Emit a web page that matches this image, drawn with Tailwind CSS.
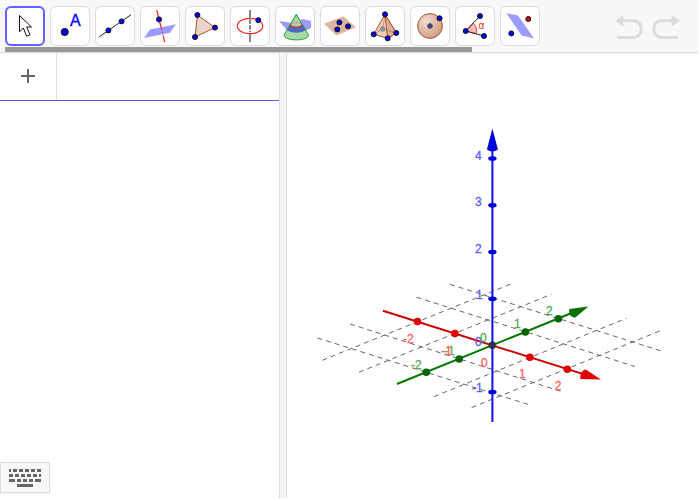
<!DOCTYPE html>
<html lang="en">
<head>
<meta charset="utf-8">
<title>3D Calculator</title>
<script src="https://cdn.jsdelivr.net/npm/@tailwindcss/browser@4"></script>
</head>
<body class="bg-white font-['Liberation_Sans',sans-serif]">
<div class="flex h-screen flex-col pr-0.5 pb-0.5">
  <header class="border-b border-[#dcdcdc] bg-[#f8f8f8] pt-1.5 shadow-xs">
    <div class="flex items-center justify-between pr-4 pl-[5px]">
      <nav aria-label="Tools" class="flex gap-[5px]">
        <button aria-label="Move" class="grid size-10 place-items-center rounded-md border-2 border-[#6161ff] bg-white">
          <svg class="size-8" viewBox="0 0 32 32"><path d="M10.5 5.5V21.8L14.3 18L17.6 26.2L21 24.8L17.7 17H22.5Z" fill="#fff" stroke="#1d0d14" stroke-width="1"/></svg>
        </button>
        <button aria-label="Point" class="grid size-10 place-items-center rounded-md border border-[#dcdcdc] bg-white">
          <svg class="size-8" viewBox="0 0 32 32"><circle cx="10.7" cy="22" r="3.6" fill="#0000e6" stroke="#111"/><text x="16" y="16" font-size="16" fill="#00f" stroke="#00f" stroke-width=".3">A</text></svg>
        </button>
        <button aria-label="Line" class="grid size-10 place-items-center rounded-md border border-[#dcdcdc] bg-white">
          <svg class="size-8" viewBox="0 0 32 32"><path d="M0 27L32 4.7" stroke="#222"/><g fill="#00e" stroke="#111"><circle cx="9.4" cy="20.4" r="2.5"/><circle cx="22.6" cy="11.4" r="2.5"/></g></svg>
        </button>
        <button aria-label="Perpendicular line" class="grid size-10 place-items-center rounded-md border border-[#dcdcdc] bg-white">
          <svg class="size-8" viewBox="0 0 32 32"><path d="M0 28L6 19.5L32 14.3L26 22.7Z" fill="#9c9cff"/><path d="M12.7 0L17.2 18M19.3 26.5L20.7 32" stroke="#f22" stroke-width="1.2"/><path d="M17.2 18L19.3 26.5" stroke="#d03070" stroke-dasharray="2 1.5"/><circle cx="15" cy="9.4" r="2.5" fill="#00e" stroke="#111"/></svg>
        </button>
        <button aria-label="Polygon" class="grid size-10 place-items-center rounded-md border border-[#dcdcdc] bg-white">
          <svg class="size-8" viewBox="0 0 32 32"><path d="M8.4 5L26 17.6L6 27Z" fill="#ebd5cb" stroke="#a9562b"/><g fill="#00e" stroke="#111"><circle cx="8.4" cy="5" r="2.5"/><circle cx="26" cy="17.6" r="2.5"/><circle cx="6" cy="27" r="2.5"/></g></svg>
        </button>
        <button aria-label="Circle with axis" class="grid size-10 place-items-center rounded-md border border-[#dcdcdc] bg-white">
          <svg class="size-8" viewBox="0 0 32 32"><ellipse cx="16" cy="16" rx="12.7" ry="7.7" fill="none" stroke="#f22" stroke-width="1.2"/><path d="M16 0V14" stroke="#888" stroke-width="2"/><path d="M16 24V32" stroke="#888" stroke-width="2"/><path d="M16 15.5V23.5" stroke="#777" stroke-width="2" stroke-dasharray="4 1.5 1 1.5"/><circle cx="24.3" cy="10.2" r="2.5" fill="#00e" stroke="#111"/></svg>
        </button>
        <button aria-label="Intersect surfaces" class="grid size-10 place-items-center rounded-md border border-[#dcdcdc] bg-white">
          <svg class="size-8" viewBox="0 0 32 32"><path d="M0 11L14 13L24 9L32 11V18L26 21L8 20Z" fill="#9c9cf8"/><path d="M17.3 4.5L5 25C5 31.5 29.5 31.5 29.5 25Z" fill="#a5dba5" stroke="#2f9b3f"/><path d="M11.2 14.5L8 20C12 23.5 23 23.5 26.6 20L23.4 14.5Z" fill="#4d68c0"/><path d="M17.3 5L11.5 14.3C13 18 21.5 18 23.1 14.3Z" fill="#a8d6ac"/><path d="M8 20L17.3 4.5L26.6 20" fill="none" stroke="#2f9b3f"/><path d="M11.2 14.5C13 18 21.5 18 23.4 14.5" fill="none" stroke="#e22" stroke-width="1.2"/><path d="M11.5 14.3C14 12 20.5 12 23.1 14.3" fill="none" stroke="#e55" stroke-width=".7" stroke-dasharray="2 1"/></svg>
        </button>
        <button aria-label="Plane through three points" class="grid size-10 place-items-center rounded-md border border-[#dcdcdc] bg-white">
          <svg class="size-8" viewBox="0 0 32 32"><path d="M0 13.8L19.5 6.5L32 17.3L12.5 25.5Z" fill="#dcb4a1"/><g fill="#00e" stroke="#111"><circle cx="15.4" cy="12.4" r="2.5"/><circle cx="24" cy="16.3" r="2.5"/><circle cx="13.3" cy="19.4" r="2.5"/></g></svg>
        </button>
        <button aria-label="Pyramid" class="grid size-10 place-items-center rounded-md border border-[#dcdcdc] bg-white">
          <svg class="size-8" viewBox="0 0 32 32"><path d="M16 4.3L4.7 24.3L18.7 28.3L27.3 23Z" fill="#edcdbd" stroke="#a9562b"/><path d="M16 4.3L18.7 28.3L27.3 23Z" fill="#deaf98" stroke="#a9562b"/><path d="M16 4.3L13.7 19L4.7 24.3M13.7 19L27.3 23" fill="none" stroke="#a9562b" stroke-width=".7" stroke-dasharray="2 1"/><circle cx="13.7" cy="19" r="2.3" fill="#8c94ae" stroke="#888"/><g fill="#00e" stroke="#111"><circle cx="16" cy="4.3" r="2.5"/><circle cx="4.7" cy="24.3" r="2.5"/><circle cx="18.7" cy="28.3" r="2.5"/><circle cx="27.3" cy="23" r="2.5"/></g></svg>
        </button>
        <button aria-label="Sphere" class="grid size-10 place-items-center rounded-md border border-[#dcdcdc] bg-white">
          <svg class="size-8" viewBox="0 0 32 32"><defs><radialGradient id="ball" cx=".35" cy=".3" r=".75"><stop offset="0" stop-color="#f2ddd3"/><stop offset="1" stop-color="#d09a80"/></radialGradient></defs><circle cx="16" cy="16" r="12.4" fill="url(#ball)" stroke="#a9562b"/><circle cx="16" cy="16" r="2.3" fill="#4b38a8" stroke="#444"/><circle cx="25.6" cy="8.3" r="2.5" fill="#00e" stroke="#111"/></svg>
        </button>
        <button aria-label="Angle" class="grid size-10 place-items-center rounded-md border border-[#dcdcdc] bg-white">
          <svg class="size-8" viewBox="0 0 32 32"><path d="M6.7 21L14.3 13.2A11 11 0 0 1 17.4 23.7Z" fill="#ffb9b9" stroke="#e44"/><path d="M21 6L6.7 21L25 26" fill="none" stroke="#222"/><text x="19.5" y="19" font-size="10" fill="#f22">α</text><g fill="#00e" stroke="#111"><circle cx="21" cy="6" r="2.5"/><circle cx="6.7" cy="21" r="2.5"/><circle cx="25" cy="26" r="2.5"/></g></svg>
        </button>
        <button aria-label="Reflect about plane" class="grid size-10 place-items-center rounded-md border border-[#dcdcdc] bg-white">
          <svg class="size-8" viewBox="0 0 32 32"><path d="M2.3 3.3L14 5.5L30 28.5L17.7 25.5Z" fill="#9c9cff"/><g stroke="#111"><circle cx="24.3" cy="9" r="2.5" fill="#d00"/><circle cx="7.3" cy="23.4" r="2.5" fill="#00e"/></g></svg>
        </button>
      </nav>
      <div class="flex gap-[5px]">
        <button aria-label="Undo" class="size-8 text-[#dcdcdc]"><svg viewBox="0 0 32 32"><path d="M2 10.7L10.3 5V16.5Z" fill="currentColor"/><path d="M10 10.7H20C31 10.7 31 27.5 20 27.5H4" fill="none" stroke="currentColor" stroke-width="3"/></svg></button>
        <button aria-label="Redo" class="size-8 text-[#dcdcdc]"><svg viewBox="0 0 32 32"><path d="M30 10.7L21.7 5V16.5Z" fill="currentColor"/><path d="M22 10.7H12C1 10.7 1 27.5 12 27.5H28" fill="none" stroke="currentColor" stroke-width="3"/></svg></button>
      </div>
    </div>
    <div class="mt-px ml-[5px] h-[5px] w-[467px] max-w-full bg-[#999]"></div>
  </header>
  <main class="flex min-h-0 flex-1">
    <section aria-label="Algebra" class="flex w-2/5 flex-col justify-between">
      <div class="flex h-12 border-b border-[#6557d2]">
        <button aria-label="Add item" class="grid w-[57px] place-items-center border-r border-[#dcdcdc] pb-px">
          <svg class="size-4" viewBox="0 0 16 16"><path d="M8 1V15M1 8H15" stroke="#666" stroke-width="2"/></svg>
        </button>
        <input aria-label="Input" class="min-w-0 flex-1 px-3 outline-none">
      </div>
      <button aria-label="Show keyboard" class="mb-[5px] grid h-[31px] w-[50px] place-items-center border border-[#dcdcdc] bg-[#f8f8f8] shadow-xs">
        <svg class="h-[18px] w-8" viewBox="0 0 32 18" fill="#666"><path d="M0 0h2v3H0zM4 0h4v3H4zM10 0h4v3h-4zM16 0h4v3h-4zM22 0h4v3h-4zM28 0h4v3h-4zM0 5h4v3H0zM6 5h4v3H6zM12 5h4v3h-4zM18 5h4v3h-4zM24 5h4v3h-4zM30 5h2v3h-2zM0 10h6v3H0zM8 10h4v3H8zM14 10h4v3h-4zM20 10h4v3h-4zM26 10h6v3h-6zM8 15h16v3H8z"/></svg>
      </button>
    </section>
    <div class="w-2 shrink-0 border-x border-[#dcdcdc] bg-[#f5f5f5]"></div>
    <section aria-label="3D Graphics" class="min-w-0 flex-1">
      <svg class="size-full" viewBox="287 53 411 445">
        <g stroke="#666" stroke-dasharray="5 4" fill="none">
          <path d="M317.5 338L531.5 405.5M350 324L564.5 392.5M416.7 297.3L635 366.5M450 284.3L663 351.5"/>
          <path d="M322.3 360.3L511 284M359 372.3L551.5 294.3M434 396.7L626.5 318.3M471.7 407.7L663 329.7"/>
        </g>
        <path d="M383 310.7L585 374.7" stroke="#c00" stroke-width="2"/>
        <path d="M397 384L573 312.5" stroke="#007a00" stroke-width="2"/>
        <path d="M601 379.5L580.5 379C580 374 582 370 586 369.5Z" fill="#e00000"/>
        <path d="M588.5 306.5L569.5 309C568.5 314 571 318 575.5 317.5Z" fill="#007200"/>
        <g fill="#e00000"><circle cx="417.5" cy="321.5" r="3.8"/><circle cx="455" cy="333.5" r="3.8"/><circle cx="530" cy="357.3" r="3.8"/><circle cx="567.5" cy="369.3" r="3.8"/></g>
        <g fill="#006400"><circle cx="426.3" cy="372.3" r="3.8"/><circle cx="459.3" cy="359" r="3.8"/><circle cx="525.5" cy="332" r="3.8"/><circle cx="558.5" cy="318.7" r="3.8"/></g>
        <circle cx="492.5" cy="345.3" r="3.8" fill="#244a24"/>
        <path d="M492.5 145V422" stroke="#1010e0" stroke-width="2"/>
        <circle cx="492.5" cy="345.3" r="2" fill="#522050"/>
        <path d="M492.5 128.5L498 149.5C495 152 490 152 487 149.5Z" fill="#0000d8"/>
        <g fill="#0000dc"><ellipse cx="492.5" cy="158.5" rx="4.2" ry="2.3"/><ellipse cx="492.5" cy="205.3" rx="4.2" ry="2.3"/><ellipse cx="492.5" cy="252" rx="4.2" ry="2.3"/><ellipse cx="492.5" cy="298.7" rx="4.2" ry="2.3"/><ellipse cx="492.5" cy="392" rx="4.2" ry="2.3"/></g>
        <g font-size="12" stroke-width=".3">
          <g fill="#5c5cff" stroke="#5c5cff"><text x="475" y="160">4</text><text x="475" y="206">3</text><text x="475" y="253">2</text><text x="476" y="299">1</text><text x="475" y="346">0</text><text x="472" y="392">-1</text></g>
          <g fill="#55aa55" stroke="#55aa55"><text x="411" y="369">-2</text><text x="444" y="355">-1</text><text x="480" y="342">0</text><text x="514" y="328">1</text><text x="546" y="315">2</text></g>
          <g fill="#ff6060" stroke="#ff6060"><text x="403" y="343">-2</text><text x="441" y="355">-1</text><text x="481" y="367">0</text><text x="519" y="378">1</text><text x="555" y="390">2</text></g>
        </g>
      </svg>
    </section>
  </main>
</div>
</body>
</html>
